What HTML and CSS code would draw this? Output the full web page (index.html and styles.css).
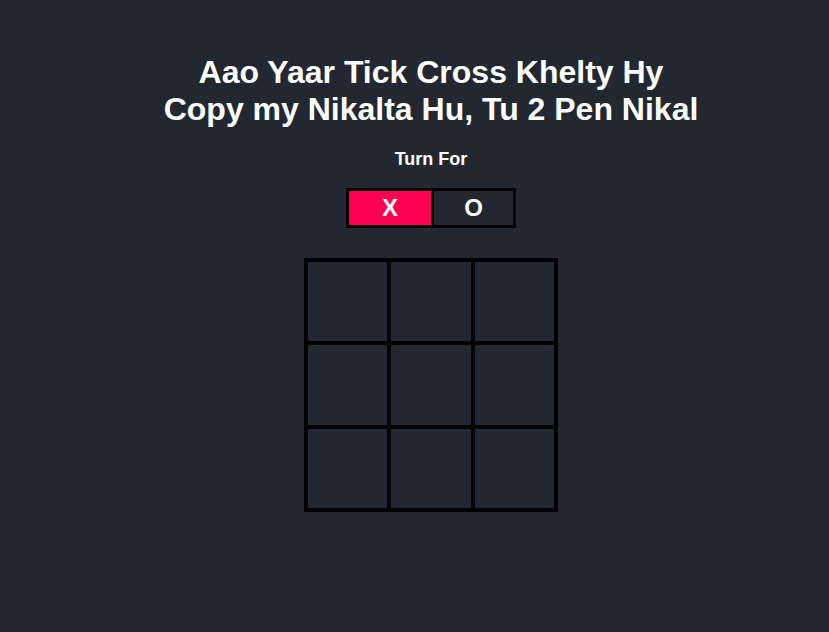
FILE: index.html
```html
<!DOCTYPE html>
<html>
<head>
<meta charset="utf-8">
<link rel="stylesheet" href="styles.css">
</head>
<body>
<main class="app">
  <h1 class="title">Aao Yaar Tick Cross Khelty Hy<br>Copy my Nikalta Hu, Tu 2 Pen Nikal</h1>
  <div class="turn-label">Turn For</div>
  <div class="turn">
    <div class="turn-x">X</div>
    <div class="turn-o">O</div>
  </div>
  <div class="board">
    <div class="cell"></div><div class="cell"></div><div class="cell"></div>
    <div class="cell"></div><div class="cell"></div><div class="cell"></div>
    <div class="cell"></div><div class="cell"></div><div class="cell"></div>
  </div>
</main>
</body>
</html>
```
FILE: styles.css
```css
html, body {
  margin: 0;
  padding: 0;
  background: #222831;
  height: 100%;
}
body {
  font-family: "Liberation Sans", Arial, sans-serif;
  color: #ffffff;
}
.app {
  display: flex;
  flex-direction: column;
  align-items: center;
  padding-left: 33px;
  padding-top: 54px;
}
.title {
  margin: 0;
  font-size: 32px;
  font-weight: bold;
  text-align: center;
  line-height: normal;
}
.turn-label {
  margin-top: 21px;
  font-size: 18px;
  font-weight: bold;
}
.turn {
  margin-top: 18px;
  display: flex;
  border: 3px solid #000;
  height: 34px;
}
.turn-x, .turn-o {
  display: flex;
  align-items: center;
  justify-content: center;
  font-size: 24px;
  font-weight: bold;
}
.turn-x {
  width: 82px;
  background: #ff0051;
  border-right: 3px solid #000;
}
.turn-o {
  width: 79px;
}
.board {
  margin-top: 30px;
  display: grid;
  grid-template-columns: repeat(3, 1fr);
  grid-template-rows: repeat(3, 1fr);
  gap: 4px;
  padding: 4px;
  background: #000;
  width: 254px;
  height: 254px;
  box-sizing: border-box;
}
.cell {
  background: #222831;
}
```
